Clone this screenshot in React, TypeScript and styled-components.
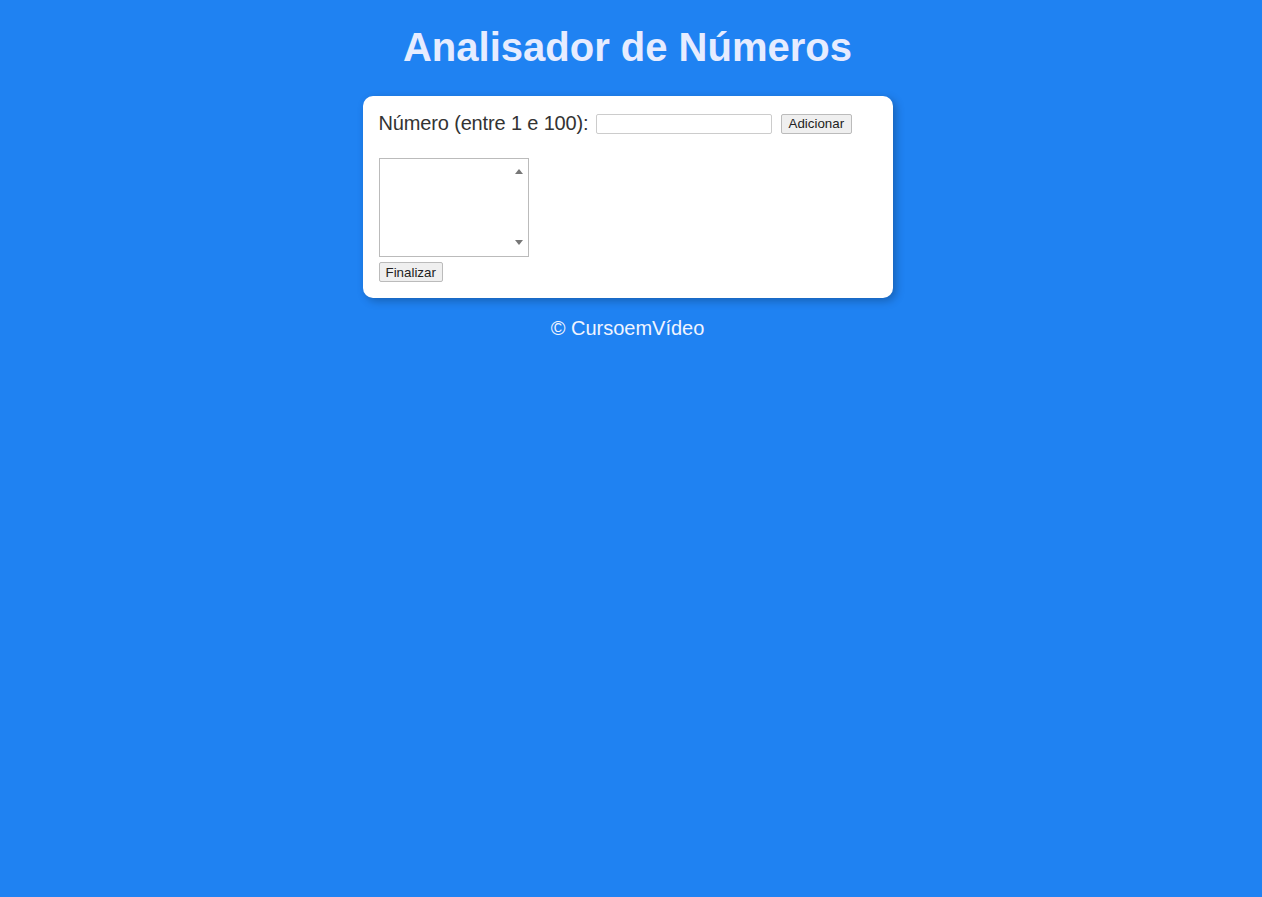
import React from "react";
import styled, { createGlobalStyle } from "styled-components";

const Global = createGlobalStyle`
  body {
    margin: 8px 15px 8px 8px;
    background-color: #1f82f2;
    font: normal 20px "Liberation Sans", Arial, sans-serif;
  }
`;

const Header = styled.header`
  color: #e6ecff;
  text-align: center;
`;

const Title = styled.h1`
  font-size: 40px;
  font-weight: bold;
  margin: 17px 0 26px;
`;

const Section = styled.section`
  background: white;
  border-radius: 10px;
  padding: 16px;
  width: 498px;
  margin: auto;
  box-shadow: 3px 3px 8px rgba(0, 0, 0, 0.25);
`;

const Row = styled.div`
  display: flex;
  align-items: center;
  gap: 6px;
  color: #333;
`;

const Label = styled.span`
  letter-spacing: -0.15px;
`;

const NumInput = styled.input`
  width: 170px;
  height: 16px;
  font-size: 13px;
  border: 1px solid #ccc;
  border-radius: 2px;
  margin: 0 3px 0 1px;
`;

const Btn = styled.button<{ $wide?: boolean }>`
  font: 13.33px "Liberation Sans", Arial, sans-serif;
  padding: 1.5px ${(p) => (p.$wide ? "7px" : "6px")};
  background: #efefef;
  border: 1px solid #bbb;
  border-radius: 2px;
  color: #222;
`;

const ListBox = styled.div`
  display: flex;
  margin-top: 23px;
  width: 148px;
  height: 97px;
  border: 1px solid #bbb;
  background: #fff;
`;

const ListArea = styled.div`
  flex: 1;
`;

const ScrollTrack = styled.div`
  width: 14px;
  display: flex;
  flex-direction: column;
  justify-content: space-between;
  align-items: center;
  padding: 10px 2px 11px 0;
`;

const Arrow = styled.span<{ $up?: boolean }>`
  width: 0;
  height: 0;
  border-left: 4px solid transparent;
  border-right: 4px solid transparent;
  ${(p) =>
    p.$up ? "border-bottom: 5px solid #777;" : "border-top: 5px solid #777;"}
`;

const Res = styled.div`
  display: flex;
  margin-top: 5px;
`;

const Footer = styled.footer`
  color: #f0f4ff;
  text-align: center;
  margin-top: 19px;
  font-size: 20px;
`;

export default function App() {
  return (
    <>
      <Global />
      <Header>
        <Title>Analisador de Números</Title>
      </Header>
      <Section>
        <Row>
          <Label>Número (entre 1 e 100):</Label>
          <NumInput type="number" />
          <Btn $wide>Adicionar</Btn>
        </Row>
        <ListBox role="listbox">
          <ListArea />
          <ScrollTrack>
            <Arrow $up />
            <Arrow />
          </ScrollTrack>
        </ListBox>
        <Res>
          <Btn>Finalizar</Btn>
        </Res>
      </Section>
      <Footer>© CursoemVídeo</Footer>
    </>
  );
}
